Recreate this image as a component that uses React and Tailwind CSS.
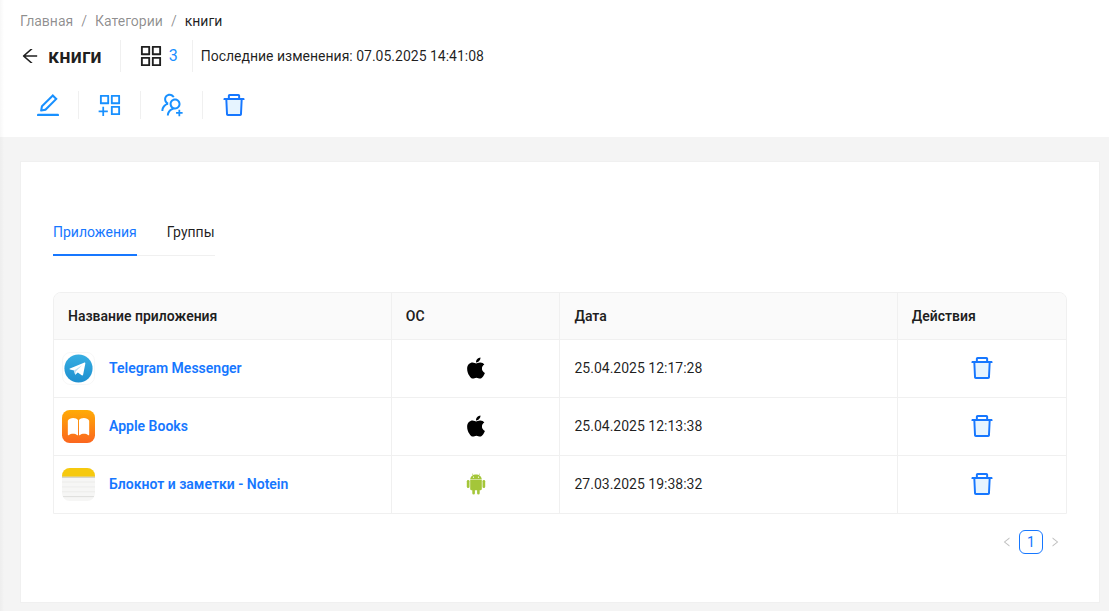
import React, { useState } from "react";
import {
    AiFillApple,
    AiOutlineAppstore,
    AiOutlineAppstoreAdd,
    AiOutlineArrowLeft,
    AiOutlineEdit,
    AiOutlineLeft,
    AiOutlineRight,
    AiOutlineUsergroupAdd,
} from "react-icons/ai";

const TrashIcon = () => (
    <svg viewBox="0 0 1024 1024" width="28" height="28" aria-hidden="true">
        <path fill="#e6f4ff" d="M292.7 840h438.6l24.2-512h-487z" />
        <path
            fill="#1677ff"
            d="M864 256H736v-80c0-35.3-28.7-64-64-64H352c-35.3 0-64 28.7-64 64v80H160c-17.7 0-32 14.3-32 32v32c0 4.4 3.6 8 8 8h60.4l24.7 523c1.6 34.1 29.8 61 63.9 61h454c34.2 0 62.3-26.8 63.9-61l24.7-523H888c4.4 0 8-3.6 8-8v-32c0-17.7-14.3-32-32-32zm-504-72h304v72H360v-72zm371.3 656H292.7l-24.2-512h487l-24.2 512z"
        />
    </svg>
);

const AndroidIcon = () => (
    <svg viewBox="0 0 20 22" width="20" height="22" fill="#a4c639" aria-hidden="true">
        <path d="M4.200 6.500C4.300 4.600 5.300 3.100 6.900 2.200L6 .7l.4-.3 1 1.600c1.600-.6 3.600-.6 5.200 0l1-1.600.4.300-.9 1.500c1.600.9 2.600 2.400 2.700 4.300z" />
        <circle cx="7.500" cy="4.200" r="0.600" fill="#fff" />
        <circle cx="12.500" cy="4.200" r="0.600" fill="#fff" />
        <path d="M4.200 7.100h11.600v9c0 .7-.5 1.200-1.200 1.200h-.9v2.900a1.300 1.300 0 0 1-2.600 0v-2.900H8.900v2.900a1.300 1.300 0 0 1-2.600 0v-2.900h-.9c-.7 0-1.200-.5-1.200-1.200z" />
        <rect x="0.800" y="7" width="2.700" height="8" rx="1.350" />
        <rect x="16.500" y="7" width="2.700" height="8" rx="1.350" />
    </svg>
);

const TelegramLogo = () => (
    <svg viewBox="0 0 34 34" width="33" height="33" aria-hidden="true">
        <defs>
            <linearGradient id="tg" x1="0" y1="0" x2="0" y2="1">
                <stop offset="0" stopColor="#37aee2" />
                <stop offset="1" stopColor="#1e8fcf" />
            </linearGradient>
        </defs>
        <rect x="0.5" y="0.5" width="33" height="33" rx="8" fill="#fff" stroke="#f7f7f7" />
        <circle cx="17" cy="17" r="14.5" fill="url(#tg)" />
        <path fill="#fff" d="M8.2 17.1 22.6 11c1-.4 1.6.1 1.4 1.2l-2.2 11.1c-.2.9-.8 1.1-1.5.7l-4-3-2 2c-.5.5-.9.4-1-.3l-.9-3.6-4.1-1.1c-.8-.2-.8-.6-.1-.9z" />
        <path fill="#bcdff3" d="m12.4 19.1 8.3-5.4-6.3 6.1-.8 3z" />
    </svg>
);

const BooksLogo = () => (
    <svg viewBox="0 0 34 34" width="33" height="33" aria-hidden="true">
        <defs>
            <linearGradient id="books" x1="0" y1="0" x2="0" y2="1">
                <stop offset="0" stopColor="#ffab05" />
                <stop offset="1" stopColor="#fb661f" />
            </linearGradient>
        </defs>
        <rect width="34" height="34" rx="8" fill="url(#books)" />
        <path fill="#fff" d="M16.500 10.200C14.800 7.500 7.700 7.200 6 11v14.300c0 .7.5.9 1 .6 2.300-2 6.500-2 8.600 0 .4.400.9.200.9-.4zM17.500 10.200c1.700-2.700 8.800-3 10.500.8v14.300c0 .7-.5.9-1 .6-2.300-2-6.500-2-8.600 0-.4.4-.9.2-.9-.4z" />
    </svg>
);

const NoteinLogo = () => (
    <svg viewBox="0 0 34 34" width="33" height="33" aria-hidden="true">
        <defs>
            <clipPath id="note">
                <rect width="34" height="34" rx="8" />
            </clipPath>
        </defs>
        <g clipPath="url(#note)">
            <rect width="34" height="34" fill="#f6f6f5" />
            <rect width="34" height="9" fill="#f6c90e" />
            <path d="M0 9.500h34" stroke="#c9c5b4" />
            <path d="M0 14.500h34M0 19.500h34M0 24.500h34" stroke="#ebebea" />
            <path d="M1 29.500h32" stroke="#dcdcda" />
        </g>
    </svg>
);

const apps = [
    { name: "Telegram Messenger", logo: TelegramLogo, os: "ios", date: "25.04.2025 12:17:28" },
    { name: "Apple Books", logo: BooksLogo, os: "ios", date: "25.04.2025 12:13:38" },
    { name: "Блокнот и заметки - Notein", logo: NoteinLogo, os: "android", date: "27.03.2025 19:38:32" },
];

const actions = [
    { label: "Редактировать", icon: AiOutlineEdit },
    { label: "Добавить приложение", icon: AiOutlineAppstoreAdd },
    { label: "Добавить группу", icon: AiOutlineUsergroupAdd },
    { label: "Удалить", icon: TrashIcon },
];

const tabs = ["Приложения", "Группы"];

function PageHeader() {
    return (
        <header className="bg-white px-5 pt-2.5 pb-4">
            <nav aria-label="Навигация">
                <ol className="flex gap-2 text-black/45">
                    <li><a href="#home">Главная</a></li>
                    <li aria-hidden="true">/</li>
                    <li><a href="#categories">Категории</a></li>
                    <li aria-hidden="true">/</li>
                    <li className="text-black/88" aria-current="page">книги</li>
                </ol>
            </nav>

            <div className="flex items-center h-8 mt-2">
                <button type="button" aria-label="Назад" className="mr-2">
                    <AiOutlineArrowLeft size={20} />
                </button>
                <h1 className="text-xl leading-8 font-semibold">книги</h1>
                <div className="flex items-center gap-1 h-8 ml-[18px] pl-4 pr-3.5 border-x border-[#f0f0f0]">
                    <AiOutlineAppstore size={28} />
                    <span className="text-base text-[#1890ff]">3</span>
                </div>
                <p className="pl-2">Последние изменения: 07.05.2025 14:41:08</p>
            </div>

            {/* Toolbar */}
            <div className="flex mt-[17px] h-8 items-center">
                {actions.map(({ label, icon: Icon }, i) => (
                    <div
                        key={label}
                        className={`flex items-center justify-center h-7 ${i === 0 ? "w-[58px] pr-0.5" : "w-[62px] border-l border-[#f0f0f0]"}`}
                    >
                        <button type="button" aria-label={label} title={label} className="text-[#1890ff]">
                            <Icon size={28} />
                        </button>
                    </div>
                ))}
            </div>
        </header>
    );
}

function AppsTable() {
    return (
        <div className="rounded-t-lg border border-[#f0f0f0] overflow-hidden">
            <table className="w-full table-fixed border-collapse">
                <thead className="bg-[#fafafa] text-left">
                    <tr className="h-[46px] border-b border-[#f0f0f0]">
                        <th className="w-1/3 px-3.5 font-semibold border-r border-[#f0f0f0]">Название приложения</th>
                        <th className="w-1/6 px-3.5 font-semibold border-r border-[#f0f0f0]">ОС</th>
                        <th className="w-1/3 px-3.5 font-semibold border-r border-[#f0f0f0]">Дата</th>
                        <th className="w-1/6 px-3.5 font-semibold">Действия</th>
                    </tr>
                </thead>
                <tbody>
                    {apps.map(({ name, logo: Logo, os, date }) => (
                        <tr key={name} className="h-[58px] border-b border-[#f0f0f0] last:border-b-0">
                            <td className="px-2 border-r border-[#f0f0f0]">
                                <a href="#app" className="flex items-center gap-3.5 font-semibold text-[#1677ff]">
                                    <Logo />
                                    {name}
                                </a>
                            </td>
                            <td className="border-r border-[#f0f0f0]">
                                <div className="flex justify-center">
                                    {os === "ios" ? (
                                        <AiFillApple size={26} className="text-black" />
                                    ) : (
                                        <AndroidIcon />
                                    )}
                                </div>
                            </td>
                            <td className="px-3.5 border-r border-[#f0f0f0]">{date}</td>
                            <td>
                                <div className="flex justify-center">
                                    <button type="button" aria-label={`Удалить ${name}`}>
                                        <TrashIcon />
                                    </button>
                                </div>
                            </td>
                        </tr>
                    ))}
                </tbody>
            </table>
        </div>
    );
}

export default function App() {
    const [activeTab, setActiveTab] = useState(tabs[0]);

    return (
        <div className="relative min-h-screen bg-[#f4f4f4] font-[Roboto,sans-serif] text-sm leading-[22px] text-black/88">
            <PageHeader />

            <main className="pt-6 pl-5 pr-[9px] pb-2">
                <section className="bg-white border border-[#f0f0f0] px-8 pt-12 pb-12">
                    <div role="tablist" className="inline-flex gap-[30px] border-b border-[#f0f0f0]">
                        {tabs.map((tab) => (
                            <button
                                key={tab}
                                type="button"
                                role="tab"
                                aria-selected={tab === activeTab}
                                onClick={() => setActiveTab(tab)}
                                className={`pt-[11px] pb-[11px] -mb-px border-b-2 ${tab === activeTab
                                    ? "text-[#1677ff] border-[#1677ff]"
                                    : "border-transparent"
                                    }`}
                            >
                                {tab}
                            </button>
                        ))}
                    </div>

                    <div className="mt-9">
                        <AppsTable />
                    </div>

                    <nav aria-label="Страницы" className="flex justify-end items-center mt-4">
                        <button type="button" aria-label="Назад" disabled className="flex w-6 h-6 items-center justify-center text-black/25">
                            <AiOutlineLeft size={12} />
                        </button>
                        <button type="button" aria-current="page" className="w-6 h-6 rounded-md border border-[#1677ff] text-[#1677ff]">
                            1
                        </button>
                        <button type="button" aria-label="Вперёд" disabled className="flex w-6 h-6 items-center justify-center text-black/25">
                            <AiOutlineRight size={12} />
                        </button>
                    </nav>
                </section>
            </main>

            <div className="absolute inset-y-0 left-0 w-1 bg-linear-to-r from-black/3 to-transparent pointer-events-none" />
        </div>
    );
}
